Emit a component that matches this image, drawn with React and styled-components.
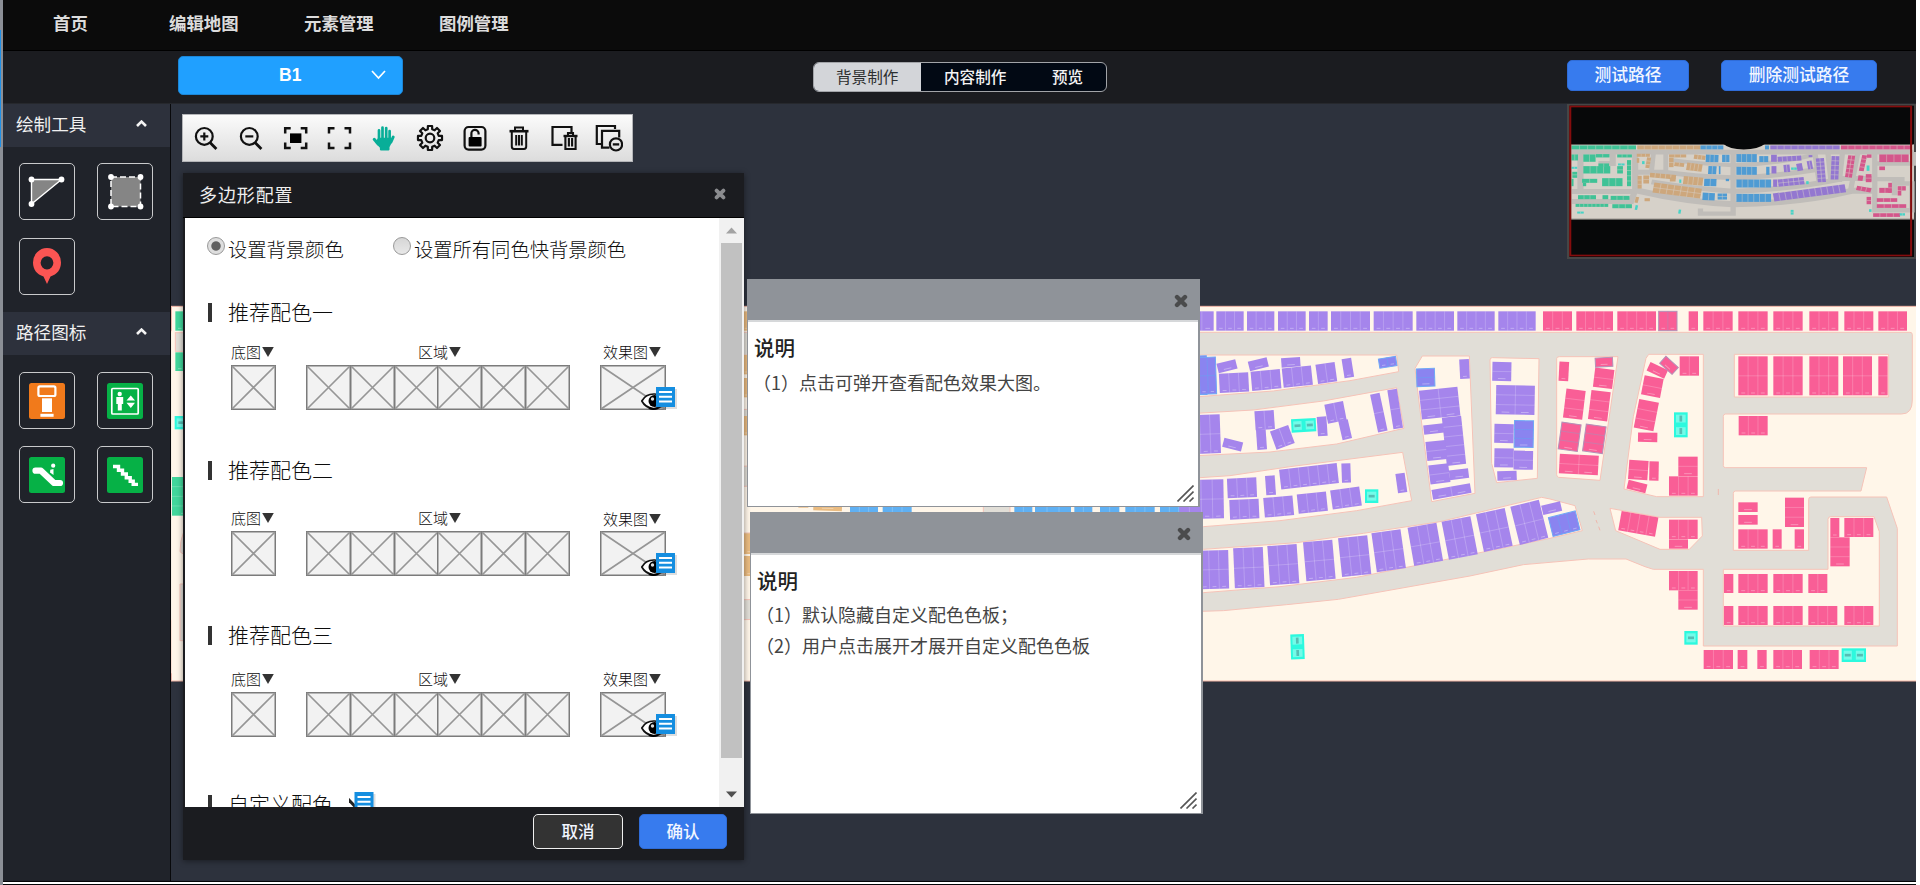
import React from 'react';
import styled, { createGlobalStyle } from 'styled-components';

const GlobalStyle = createGlobalStyle`
  * { box-sizing: border-box; }
  body {
    margin: 0;
    background: #fff;
    font-family: "Liberation Sans", "Noto Sans CJK SC", sans-serif;
    overflow: hidden;
  }
  svg { display: block; flex: none; }
`;

/* ---------- shell ---------- */

const Page = styled.div`
  width: 1920px;
  height: 885px;
  display: flex;
  background: #fff;
`;

const EdgeStrip = styled.div`
  width: 3px;
  height: 885px;
  background: #8b8f96;
  padding-top: 30px;
`;

const EdgeMark = styled.div`
  width: 1px;
  height: 117px;
  background: #1f8fe6;
`;

const Shell = styled.div`
  width: 1913px;
  height: 885px;
  display: flex;
  flex-direction: column;
`;

const NavBar = styled.nav`
  height: 51px;
  display: flex;
  background: #0b0b0b;
  border-bottom: 1px solid #000;
  padding: 0 0 2px 50px;
`;

const NavItem = styled.a`
  width: ${(p) => p.$width}px;
  line-height: 49px;
  font-size: 17.4px;
  font-weight: 700;
  color: #dcdcdc;
`;

const SubBar = styled.div`
  height: 53px;
  display: flex;
  background: #1b1c20;
  border-bottom: 1px solid #26282d;
`;

const FloorSelect = styled.div`
  margin: 5px 0 0 175px;
  width: 225px;
  height: 39px;
  display: flex;
  align-items: center;
  padding: 0 0 1px 100px;
  gap: 70px;
  background: #20a0ff;
  border: 1px solid #1c86d6;
  border-radius: 5px;
  color: #fff;
  font-size: 17.5px;
  font-weight: 700;
`;

const Segments = styled.div`
  margin: 11px 0 0 410px;
  width: 294px;
  height: 30px;
  display: flex;
  border: 1px solid #a2a4a8;
  border-radius: 6px;
  background: #020914;
  overflow: hidden;
`;

const Segment = styled.div`
  width: ${(p) => p.$width}px;
  padding-left: ${(p) => p.$pad}px;
  line-height: 29px;
  font-size: 15.6px;
  font-weight: ${(p) => (p.$active ? 400 : 500)};
  color: ${(p) => (p.$active ? '#2d2f30' : '#f4f4f4')};
  background: ${(p) => (p.$active ? '#d3d5d9' : 'transparent')};
  white-space: nowrap;
`;

const BlueButton = styled.button`
  width: ${(p) => p.$width}px;
  height: ${(p) => p.$height}px;
  margin: ${(p) => p.$margin || '0'};
  padding: 2px 0 0;
  border: 1px solid ${(p) => (p.$dark ? '#f0f0f0' : '#2f6cd8')};
  border-radius: 5px;
  background: ${(p) => (p.$dark ? '#333' : '#377bee')};
  color: #f2f6ff;
  font-family: inherit;
  font-size: ${(p) => p.$size}px;
  font-weight: 500;
  line-height: 1;
`;

const Main = styled.div`
  height: 777px;
  display: flex;
`;

const Footline = styled.div`
  height: 4px;
  border-top: 1px solid #050608;
  border-bottom: 1px solid #050608;
  background: #fff;
`;

/* ---------- sidebar ---------- */

const Sidebar = styled.aside`
  width: 168px;
  background: #20232a;
  border-right: 1px solid #08090b;
`;

const GroupHead = styled.div`
  height: 43px;
  display: flex;
  align-items: center;
  justify-content: space-between;
  padding: 0 23px 4px 13px;
  background: #2d313c;
  color: #f0f0f0;
  font-size: 17.6px;
`;

const ToolGrid = styled.div`
  display: flex;
  flex-wrap: wrap;
  align-content: flex-start;
  gap: ${(p) => p.$gap}px 22px;
  height: ${(p) => p.$height}px;
  padding: ${(p) => p.$top}px 0 0 16px;
`;

const Tool = styled.div`
  width: 56px;
  height: 57px;
  border: 1px solid #c9cacc;
  border-radius: 5px;
  display: flex;
  align-items: center;
  justify-content: center;
`;

/* ---------- canvas ---------- */

const Canvas = styled.main`
  position: relative;
  width: 1745px;
  height: 777px;
  background: #2d323d;
  overflow: hidden;
`;

const Toolbar = styled.div`
  position: absolute;
  left: 11px;
  top: 10px;
  width: 451px;
  height: 48px;
  display: flex;
  align-items: center;
  justify-content: space-between;
  padding: 0 9px 0 9px;
  background: linear-gradient(#fbfbfb, #dcdcdc);
  border: 1px solid #b4b5b8;
`;

const MiniMapFrame = styled.div`
  position: absolute;
  left: 1396px;
  top: 0;
  width: 349px;
  height: 155px;
`;

const Dialog = styled.section`
  position: absolute;
  left: 12px;
  top: 69px;
  width: 561px;
  height: 687px;
  display: flex;
  flex-direction: column;
  background: #1b1c20;
  box-shadow: 0 1px 6px rgba(0, 0, 0, 0.45);
`;

const DialogHead = styled.header`
  height: 45px;
  display: flex;
  align-items: center;
  justify-content: space-between;
  padding: 0 18px 2px 16px;
  border-bottom: 1px solid #000;
  color: #eee;
  font-size: 18px;
  letter-spacing: 0.9px;
`;

const DialogMiddle = styled.div`
  height: 589px;
  margin-left: 2px;
  display: flex;
  background: #fff;
`;

const DialogBody = styled.div`
  width: 534px;
  height: 589px;
  overflow: hidden;
  padding-left: 22px;
  color: #333;
`;

const DialogFoot = styled.footer`
  height: 53px;
  display: flex;
  justify-content: flex-end;
  gap: 16px;
  padding: 7px 17px 0 0;
`;

const ScrollTrack = styled.div`
  width: 25px;
  display: flex;
  flex-direction: column;
  align-items: center;
  background: #f1f1f1;
`;

const ScrollArrow = styled.div`
  height: 25px;
  display: flex;
  align-items: center;
`;

const ScrollThumb = styled.div`
  width: 21px;
  height: 515px;
  margin-bottom: 24px;
  background: #c1c1c1;
`;

const RadioRow = styled.div`
  height: 56px;
  display: flex;
  align-items: center;
`;

const Radio = styled.span`
  width: 18px;
  height: 18px;
  flex: none;
  border: 1px solid #999;
  border-radius: 50%;
  background: ${(p) =>
    p.$on
      ? 'radial-gradient(circle, #606060 0 4.2px, #dedede 5.2px)'
      : 'linear-gradient(#d6d6d6, #e8e8e8)'};
`;

const RadioText = styled.span`
  width: ${(p) => p.$width}px;
  padding: 5px 0 0 3px;
  font-size: 19.3px;
  font-weight: 300;
  color: #0c0c0c;
  white-space: nowrap;
`;

const SectionTitle = styled.h3`
  height: 40px;
  margin: ${(p) => p.$top}px 0 0 1px;
  display: flex;
  align-items: center;
  gap: 16px;
  font-size: 21px;
  font-weight: 300;
  line-height: 39px;
  color: #0c0c0c;
`;

const TitleBar = styled.span`
  width: 4px;
  height: 19px;
  background: #333;
`;

const PaletteRow = styled.div`
  display: flex;
  margin: ${(p) => p.$top}px 0 0 24px;
  gap: 30px;
`;

const Palette = styled.div`
  display: flex;
  flex-direction: column;
  gap: 2px;
`;

const PaletteLabel = styled.div`
  height: 20px;
  padding: ${(p) => (p.$low ? 2 : 0)}px 0 0 ${(p) => p.$pad}px;
  display: flex;
  align-items: center;
  gap: 1px;
  font-size: 15px;
  font-weight: 300;
  color: #0c0c0c;
  line-height: 20px;
`;

const Swatches = styled.div`
  display: flex;
  position: relative;
`;

const EyeBadge = styled.div`
  position: absolute;
  left: 41px;
  top: 22px;
`;

const Note = styled.section`
  position: absolute;
  left: ${(p) => p.$x}px;
  top: ${(p) => p.$y}px;
  width: 453px;
  height: ${(p) => p.$height}px;
  display: flex;
  flex-direction: column;
  background: #8f9399;
  padding: 0 2px 1px 1px;
`;

const NoteHead = styled.header`
  height: 41px;
  display: flex;
  align-items: center;
  justify-content: flex-end;
  padding: 3px 10px 0 0;
`;

const NoteBody = styled.div`
  flex: 1;
  display: flex;
  flex-direction: column;
  border-top: 2px solid #d6d8da;
  background: #fff;
  padding: 13px 4px 4px 6px;
`;

const NoteTitle = styled.h4`
  margin: 0 0 ${(p) => p.$gap}px;
  height: 28px;
  line-height: 28px;
  font-size: 20.5px;
  font-weight: 500;
  color: #222;
`;

const NoteLine = styled.p`
  margin: 0 0 0 -1px;
  height: 31px;
  line-height: 31px;
  font-size: 18px;
  font-weight: 400;
  color: #444;
  font-family: "Noto Sans CJK SC", sans-serif;
`;

const Grip = styled.div`
  margin-top: auto;
  align-self: flex-end;
`;

/* ---------- small drawings ---------- */

const Cross = ({ size, color }) => (
  <svg width={size} height={size} viewBox="0 0 14 14">
    <path d="M3 3 11 11M11 3 3 11" stroke={color} strokeWidth="4.4" strokeLinecap="round" />
  </svg>
);

const Caret = ({ color, up }) => (
  <svg width="11" height="7" viewBox="0 0 11 7">
    <path d={up ? 'M5.5 0.5 11 6.5H0Z' : 'M0 0.5H11L5.5 6.5Z'} fill={color} />
  </svg>
);

const ChevronUp = () => (
  <svg width="11" height="7" viewBox="0 0 11 7">
    <path d="M1 6 5.5 1.6 10 6" fill="none" stroke="#f4f4f4" strokeWidth="2.6" />
  </svg>
);

const LabelCaret = () => (
  <svg width="12" height="16" viewBox="0 0 12 16">
    <path d="M0.2 2H11.8L6 12Z" fill="#333" />
  </svg>
);

const Placeholder = ({ width, overlap }) => (
  <svg width={width} height="45" viewBox={`0 0 ${width} 45`} style={overlap ? { marginLeft: -1.2 } : undefined}>
    <rect x="0.75" y="0.75" width={width - 1.5} height="43.5" fill="#f2f2f2" stroke="#7b7b7b" strokeWidth="1.5" />
    <path d={`M1 1 ${width - 1} 44M${width - 1} 1 1 44`} stroke="#969696" strokeWidth="1.7" />
  </svg>
);

const NoteIcon = () => (
  <g>
    <rect x="1" y="2" width="20" height="20" fill="#000" opacity="0.13" />
    <rect width="19" height="20" fill="#158ee0" />
    <path d="M3 5H16M3 9.8H16M3 14.5H16" stroke="#fff" strokeWidth="2" />
  </g>
);

const EyeNote = () => (
  <svg width="36" height="24" viewBox="0 0 36 24">
    <path d="M0.8 14C3.5 9 8 6.8 13.5 7S23 10 26 14C22 19.5 17 22 12 21.5S3 18 0.8 14Z" fill="#fff" stroke="#111" strokeWidth="1.7" />
    <circle cx="13.5" cy="14" r="6" fill="#000" />
    <circle cx="11.5" cy="12" r="1.7" fill="#ddd" />
    <path d="M8 21Q12 23 17 21" stroke="#000" strokeWidth="2" fill="none" />
    <g transform="translate(15 0)"><NoteIcon /></g>
  </svg>
);

const GripIcon = () => (
  <svg width="17" height="17" viewBox="0 0 17 17">
    <path d="M0.5 16.5 16.5 0.5M6.5 16.5 16.5 6.5M12.5 16.5 16.5 12.5" stroke="#555" strokeWidth="1.6" />
  </svg>
);

const gearPath = (() => {
  const pts = [];
  for (let i = 0; i < 8; i += 1) {
    [[-14, 9], [-10, 12.2], [10, 12.2], [14, 9]].forEach(([off, r]) => {
      const a = ((i * 45 + off - 90) * Math.PI) / 180;
      pts.push(`${(14 + r * Math.cos(a)).toFixed(2)} ${(14 + r * Math.sin(a)).toFixed(2)}`);
    });
  }
  return `M${pts.join('L')}Z`;
})();

const toolbarIcons = [
  <><circle cx="12.3" cy="12.4" r="8.4" /><path d="M18 18.6 24.4 25" strokeWidth="2.8" /><path d="M8.3 12.4H16.3M12.3 8.4V16.4" /></>,
  <><circle cx="12.3" cy="12.4" r="8.4" /><path d="M18 18.6 24.4 25" strokeWidth="2.8" /><path d="M8.3 12.4H16.3" /></>,
  <g transform="translate(-0.8 0)"><path d="M4 9.5V4.3H9.5M19.5 4.3H25V9.5M25 18.5V24H19.5M9.5 24H4V18.5" strokeWidth="2.5" /><rect x="8.8" y="9.4" width="11.4" height="9.6" fill="#000" stroke="none" /></g>,
  <path transform="translate(-1 0)" d="M4 9.5V4.3H9.5M19.5 4.3H25V9.5M25 18.5V24H19.5M9.5 24H4V18.5" strokeWidth="2.5" />,
  <g transform="translate(-1.8 0)" stroke="#08ae98" fill="#08ae98" strokeLinecap="round" strokeLinejoin="round">
    <path d="M9.8 16V6.4M13.3 15V3.6M17 15V4M20.4 16V7" strokeWidth="2.7" />
    <path d="M5 15.3 9 20M24 13 21.8 18" strokeWidth="3" />
    <path d="M9.5 14.5H21L22 18 19.5 23V25.6H11.5V23.5L7 18.5Z" strokeWidth="1.6" />
  </g>,
  <><path d={gearPath} strokeLinejoin="round" /><circle cx="14" cy="14" r="4.3" /></>,
  <><rect x="3.6" y="3" width="20.8" height="22.6" rx="4" /><rect x="7.6" y="13" width="13" height="9.6" rx="1" fill="#000" stroke="none" /><path d="M10.4 13V9.8A3.6 3.6 0 0 1 17.6 9.2V10.5" /></>,
  <><path d="M4.5 7.2H23.5" strokeWidth="2.6" /><path d="M10 6V3.6H18V6M6.8 8V22.6Q6.8 25 9 25H19Q21.2 25 21.2 22.6V8M11.2 11V21.5M14 11V21.5M16.8 11V21.5" strokeWidth="2" /></>,
  <><path d="M12.5 20.8H2.5V3H21.5V8" /><path d="M13.5 12H27.5" strokeWidth="2.4" /><path d="M18 11V9H23V11M15.4 13V25H25.6V13M18.9 14V22.5M22.1 14V22.5" strokeWidth="2.1" /></>,
  <><path d="M6 20H1.8V2H20V5" /><path d="M14.5 23.6H7V6.8H24.2V13.5" /><circle cx="21" cy="20.4" r="6.1" /><path d="M17.8 20.4H24.2" strokeWidth="2.3" /></>,
];

const sideIcons = {
  triangle: (
    <svg width="54" height="55" viewBox="1 1 54 55">
      <path d="M12.5 16.5H42.5L12.5 41Z" fill="#858585" stroke="#fff" strokeWidth="1.4" />
      <g fill="#fff"><circle cx="12.5" cy="16.5" r="2.9" /><circle cx="42.5" cy="16.5" r="2.9" /><circle cx="12.5" cy="41" r="2.9" /></g>
    </svg>
  ),
  square: (
    <svg width="54" height="55" viewBox="1 1 54 55">
      <rect x="14" y="14" width="29.5" height="29.5" fill="#858585" stroke="#fff" strokeWidth="1.5" strokeDasharray="6 3" />
      <g fill="#fff"><circle cx="14" cy="14" r="2.9" /><circle cx="43.5" cy="14" r="2.9" /><circle cx="14" cy="43.5" r="2.9" /><circle cx="43.5" cy="43.5" r="2.9" /></g>
    </svg>
  ),
  pin: (
    <svg width="54" height="55" viewBox="1 1 54 55">
      <path fillRule="evenodd" d="M28 46 24.5 38.5C18 36.5 14 31.5 14 24.5A14 14.5 0 0 1 42 24.5C42 31.5 38 36.5 31.5 38.5ZM28 18.2A6.4 6.6 0 1 0 28 31.4A6.4 6.6 0 1 0 28 18.2Z" fill="#fb5553" />
    </svg>
  ),
  kiosk: (
    <svg width="36" height="36" viewBox="0 0 36 36">
      <rect width="36" height="36" rx="2.5" fill="#f17a1b" />
      <rect x="9.4" y="3.4" width="17" height="9.6" rx="1.5" fill="none" stroke="#fff" strokeWidth="2.2" />
      <rect x="13" y="15.3" width="10" height="13.7" fill="#fff" />
      <rect x="11.4" y="30.8" width="13.2" height="3" fill="#fff" />
    </svg>
  ),
  elevator: (
    <svg width="36" height="36" viewBox="0 0 36 36">
      <rect width="36" height="36" rx="2.5" fill="#06b146" />
      <rect x="4.8" y="5.5" width="26.4" height="25.5" rx="1" fill="none" stroke="#fff" strokeWidth="1.7" />
      <circle cx="12.7" cy="11" r="2.2" fill="#fff" />
      <path d="M9.3 14H16.2V21H14.8V27.5H10.8V21H9.3ZM19.5 17.5 23.8 12.4 28 17.5ZM19.5 19.8H28L23.8 25Z" fill="#fff" />
    </svg>
  ),
  escalator: (
    <svg width="36" height="36" viewBox="0 0 36 36">
      <rect width="36" height="36" rx="2.5" fill="#06b146" />
      <path d="M6.5 13.7H12L25 26H31" fill="none" stroke="#fff" strokeWidth="6.2" strokeLinecap="round" strokeLinejoin="round" />
      <circle cx="24.2" cy="8.7" r="2.1" fill="#fff" />
      <path d="M21.3 12.8 24.5 12V18L21 15.5Z" fill="#fff" />
    </svg>
  ),
  stairs: (
    <svg width="36" height="36" viewBox="0 0 36 36">
      <rect width="36" height="36" rx="2.5" fill="#06b146" />
      <path d="M6 9.5H11.5V13.2H15.5V17H19.3V20.8H23.2V24.3H26.2V27.4H31" fill="none" stroke="#fff" strokeWidth="3.4" />
    </svg>
  ),
};

/* ---------- map ---------- */

const PURPLE = '#a585ec';
const PINK = '#f95e96';
const BLUE = '#5fb0f3';
const ORANGE = '#eabb80';
const GREEN = '#41d69b';
const INDIGO = '#8a84f0';

// [x, y, width, height, columns, rows, angle]
const purpleBlocks = [
  [0, 34, 71, 58, 2, 1], [79, 34, 82, 58, 3, 1], [171, 34, 82, 58, 3, 1], [264, 34, 83, 58, 3, 1], [357, 34, 56, 58, 2, 1],
  [423, 34, 117, 58, 4, 1], [551, 34, 117, 58, 4, 1], [679, 34, 113, 58, 4, 1], [802, 34, 112, 58, 4, 1], [925, 34, 112, 58, 4, 1],
  [82, 184, 58, 29, 1, 1, -14], [176, 178, 58, 29, 1, 1, -14], [274, 173, 57, 28, 1, 1, -4],
  [88, 219, 88, 58, 3, 1, -3], [184, 211, 88, 58, 3, 1, -5], [278, 201, 88, 58, 3, 1, -6],
  [380, 190, 58, 58, 2, 1, -8], [459, 175, 29, 58, 1, 1, -9],
  [0, 344, 91, 117, 3, 2, -2], [195, 332, 58, 57, 2, 1, -4], [200, 389, 29, 60, 1, 1, -4], [99, 420, 58, 28, 1, 1, 14],
  [248, 383, 58, 58, 2, 1, -20], [382, 350, 29, 58, 1, 1, -4], [408, 308, 57, 58, 2, 1, -11], [451, 360, 29, 58, 1, 1, -13],
  [552, 280, 29, 116, 1, 2, -12], [601, 268, 29, 118, 1, 2, -9],
  [0, 539, 101, 117, 3, 2, -1], [112, 534, 88, 59, 3, 1, -2.5], [227, 527, 29, 58, 1, 1, -4],
  [270, 499, 174, 60, 6, 1, -6.5], [455, 490, 27, 58, 1, 1, -2], [620, 520, 28, 58, 1, 1, -8],
  [119, 598, 88, 59, 3, 1, -2.5], [222, 590, 88, 59, 3, 1, -5], [323, 579, 88, 58, 3, 1, -6], [424, 565, 88, 58, 3, 1, -8],
  [809, 178, 29, 58, 1, 1, -3], [691, 266, 116, 87, 2, 3, -6], [763, 350, 58, 145, 1, 5, -6],
  [701, 373, 60, 28, 1, 1, -7], [709, 423, 60, 57, 1, 2, -6], [718, 493, 60, 57, 1, 2, -7], [778, 508, 58, 29, 1, 1, -7], [726, 560, 117, 29, 2, 1, -10],
  [907, 186, 57, 57, 1, 2, 1], [918, 256, 116, 88, 2, 3, 1], [913, 372, 58, 57, 1, 2, 1], [913, 445, 58, 57, 1, 2, 1], [971, 452, 58, 57, 1, 2, 1], [922, 513, 58, 28, 1, 1, -2],
  [-60, 752, 176, 116, 6, 2, -1.5], [132, 743, 89, 120, 3, 2, -2.5], [236, 735, 88, 118, 3, 2, -4], [344, 723, 88, 117, 3, 2, -5],
  [450, 710, 88, 117, 3, 2, -6], [552, 693, 88, 118, 3, 2, -8], [662, 675, 88, 116, 3, 2, -10], [765, 656, 88, 116, 3, 2, -11],
  [869, 632, 88, 116, 3, 2, -12], [974, 608, 88, 118, 3, 2, -14], [1056, 610, 58, 29, 1, 1, -13],
  [-30, 620, 60, 130, 2, 2, -2],
];

const indigoBlocks = [
  [0, 168, 50, 116, 2, 2, -1], [28, 172, 50, 110, 2, 2, -2], [567, 173, 52, 28, 2, 1, -9], [680, 206, 54, 53, 1, 2, -2],
  [973, 362, 57, 80, 1, 3, 1], [1081, 642, 83, 58, 3, 1, -14],
];

const pinkBlocks = [
  [1059, 34, 87, 58, 3, 1], [1159, 34, 110, 58, 4, 1], [1282, 34, 116, 58, 4, 1], [1496, 34, 28, 58, 1, 1],
  [1540, 34, 88, 58, 3, 1], [1645, 34, 88, 58, 3, 1], [1750, 34, 88, 58, 3, 1], [1858, 34, 87, 58, 3, 1], [1963, 34, 87, 58, 3, 1], [2065, 34, 86, 58, 3, 1],
  [1645, 169, 88, 117, 3, 2], [1750, 169, 88, 117, 3, 2], [1858, 169, 87, 117, 3, 2], [1959, 169, 87, 117, 3, 2], [2065, 169, 28, 117, 1, 2],
  [1107, 185, 29, 58, 1, 1, 3], [1212, 206, 58, 58, 1, 2, 7], [1124, 269, 58, 87, 1, 3, 7], [1199, 273, 58, 88, 1, 3, 7],
  [1108, 464, 117, 59, 2, 2, 3],
  [1469, 169, 58, 58, 2, 1], [1373, 197, 58, 28, 1, 1, 25], [1358, 231, 58, 58, 1, 2, 11], [1339, 302, 60, 87, 1, 3, 11],
  [1344, 398, 58, 28, 1, 1, 1], [1316, 481, 58, 58, 1, 2, 4], [1378, 484, 28, 58, 1, 1, 1], [1312, 546, 58, 27, 1, 1, 14],
  [1465, 470, 58, 58, 1, 2], [1437, 529, 86, 58, 3, 1],
  [1646, 348, 87, 58, 3, 1], [1645, 607, 58, 29, 1, 1], [1645, 645, 58, 29, 1, 1], [1785, 593, 57, 88, 1, 3],
  [1645, 688, 88, 58, 3, 1], [1748, 688, 27, 58, 1, 1], [1814, 688, 28, 58, 1, 1], [1921, 654, 27, 58, 1, 1], [1963, 654, 87, 57, 3, 1], [1921, 712, 58, 87, 1, 3],
  [1289, 642, 112, 59, 4, 1, 10], [1437, 659, 86, 58, 3, 1], [1437, 718, 57, 28, 1, 1], [1437, 813, 86, 58, 3, 1], [1465, 871, 58, 58, 1, 2],
  [1602, 822, 28, 57, 1, 1], [1645, 822, 88, 57, 3, 1], [1750, 822, 88, 57, 3, 1], [1855, 822, 57, 57, 2, 1],
  [1602, 918, 28, 57, 1, 1], [1645, 918, 88, 57, 3, 1], [1750, 918, 88, 57, 3, 1], [1855, 918, 87, 57, 3, 1], [1963, 918, 87, 57, 3, 1],
  [1541, 1050, 88, 57, 3, 1], [1643, 1050, 29, 57, 1, 1], [1702, 1050, 28, 57, 1, 1], [1750, 1050, 86, 57, 3, 1], [1859, 1050, 87, 57, 3, 1],
];

const outlinedPinkBlocks = [
  [1406, 34, 55, 58, 2, 1], [1216, 173, 52, 27, 1, 1, -3], [1110, 370, 58, 81, 1, 3, 8], [1183, 376, 60, 81, 1, 3, 8], [1412, 182, 50, 28, 1, 1, 42],
];

const cyanBlocks = [
  [304, 356, 74, 40, 2, 1, -3], [525, 568, 40, 41, 1, 1], [1452, 337, 41, 75, 1, 2], [302, 1003, 41, 75, 1, 2, -2],
  [1483, 993, 40, 41, 1, 1], [1955, 1045, 73, 41, 2, 1], [-3046, 348, 40, 40, 1, 1],
];

const islands = [
  'M-1400 165H620L626 215 480 242 250 273 0 292-1400 330Z',
  'M-1400 380 0 341 190 330 400 303 620 263 642 385 440 432 240 456 0 468-1400 500Z',
  'M-1400 560 0 535 120 527 300 500 638 457 665 602 500 632 270 662 40 680-1400 700Z',
  'M675 205 697 168H838L855 580 725 605 690 330Z',
  'M900 180Q900 173 907 173L1047 176 1042 535 920 548 905 490Z',
  'M1100 176Q1100 170 1108 170H1284L1230 541 1106 532Q1100 530 1100 524Z',
  'M1376 163H1540V590H1400L1302 567 1330 350 1368 175Z',
  'M1633 163H2096V291H1633Z',
  'M-1400 760 40 748 320 728 520 700 750 665 1055 592 1080 597 1155 617 1177 692 1080 715 900 752 500 832 270 860 40 878-1400 900Z',
  'M1260 625 1410 652H1535L1537 708 1498 748H1410L1277 692Z',
  'M1600 808H1914V658Q1914 650 1922 650H2052L2068 695V978H1600Z',
];

const roadPath =
  'M-3100 97H2160Q2167 97 2167 104V300Q2167 342 2135 342H1607Q1600 342 1600 349V497Q1600 503 1607 503H2030L2013 573H1637Q1630 573 1630 580V751H1856V598Q1856 591 1863 591H2090L2122 685V1038H1540V808H1390L1365 800 1308 777H1195L1000 794 840 828 445 898 290 914 100 932 0 935-1400 960-3100 960Z';

const Block = ({ spec, fill, line = 'rgba(255,255,255,0.3)', stroke = 'none' }) => {
  const [x, y, w, h, cols, rows, angle = 0] = spec;
  let lines = '';
  for (let i = 1; i < cols; i += 1) lines += `M${x + (w * i) / cols} ${y}V${y + h}`;
  for (let i = 1; i < rows; i += 1) lines += `M${x} ${y + (h * i) / rows}H${x + w}`;
  return (
    <g transform={`rotate(${angle} ${x + w / 2} ${y + h / 2})`}>
      <rect x={x} y={y} width={w} height={h} fill={fill} stroke={stroke} strokeWidth="3" />
      <path d={lines} stroke={line} strokeWidth="2" />
      {w > 20 && w >= cols * 20 && (
        <path
          d={Array.from({ length: cols }, (_, i) => `M${x + (w * (i + 0.3)) / cols} ${y + h - 7}h${(w / cols) * 0.4}`).join('')}
          stroke="rgba(255,255,255,0.33)"
          strokeWidth="3"
        />
      )}
    </g>
  );
};

const CyanBlock = ({ spec }) => {
  const [x, y, w, h, cols, rows, angle = 0] = spec;
  const cells = [];
  for (let i = 0; i < cols; i += 1) {
    for (let j = 0; j < rows; j += 1) cells.push([x + (w * i) / cols, y + (h * j) / rows]);
  }
  const cw = w / cols;
  const ch = h / rows;
  return (
    <g transform={`rotate(${angle} ${x + w / 2} ${y + h / 2})`}>
      <rect x={x} y={y} width={w} height={h} fill="#2cf9de" />
      {cells.map(([cx, cy]) => (
        <g key={`${cx}-${cy}`}>
          <rect x={cx + 6} y={cy + 7} width={cw - 12} height={ch - 14} fill="#73fbe9" />
          <rect x={cx + cw / 2 - (rows > 1 ? 4 : 9)} y={cy + ch / 2 - (rows > 1 ? 9 : 4)} width={rows > 1 ? 8 : 18} height={rows > 1 ? 18 : 8} fill="#55bdb4" />
        </g>
      ))}
    </g>
  );
};

const simple = (fill, list) => list.map((s) => <Block key={s.join()} spec={s} fill={fill} />);

const MapDrawing = () => (
  <svg width="1745" height="777" viewBox="0 0 1745 777">
    <g transform="translate(1019 196) scale(0.33333)">
      <rect x="-3056" y="19" width="5240" height="1124" fill="#fff6e9" stroke="#f5b6a8" strokeWidth="3" />
      <g fill="#e1ded7" stroke="#f6c3b8" strokeWidth="3">
        <path d={roadPath} />
        <g fill="#fff6e9">{islands.map((d) => <path key={d} d={d} />)}</g>
        <path d="M-620 610H-540V640H-620Z" />
        <path d="M-3056 92H-2900V1120H-3056Z" fill="#fff6e9" stroke="none" />
        <rect x="-3044" y="98" width="60" height="56" />
        <path d="M-3030 755Q-3030 690-2990 660V770H-3010Z" />
        <path d="M-3030 852H-2990V1022H-3030Z" />
      </g>
      <path d="M1585 567V585M1211 634 1215 645M1218 660 1222 670M1226 680 1230 691" stroke="#efb7ac" strokeWidth="3" />
      {simple(GREEN, [[-3044, 34, 80, 58, 3, 1], [-3044, 157, 80, 56, 3, 1], [-3054, 531, 90, 116, 1, 4]])}
      {simple(ORANGE, [
        [-1345, 34, 30, 58, 1, 1], [-1345, 165, 30, 58, 1, 1], [-1345, 234, 30, 58, 1, 1], [-1345, 348, 30, 58, 1, 1],
        [-1340, 700, 40, 62, 1, 1], [-1340, 768, 40, 60, 1, 1], [-1130, 610, 86, 22, 1, 1, 2], [-1175, 611, 30, 12, 1, 1],
      ])}
      {simple(BLUE, [
        [-1020, 600, 84, 58, 3, 1], [-922, 600, 87, 58, 3, 1], [-527, 600, 54, 58, 2, 1], [-465, 600, 108, 58, 3, 1], [-347, 600, 54, 58, 2, 1],
        [-270, 600, 58, 58, 2, 1], [-194, 600, 88, 58, 3, 1], [-90, 600, 84, 58, 3, 1],
      ])}
      {simple(PURPLE, purpleBlocks)}
      {simple(PINK, pinkBlocks)}
      {outlinedPinkBlocks.map((s) => <Block key={s.join()} spec={s} fill={PINK} stroke="#b391b8" line="#b986b0" />)}
      {indigoBlocks.map((s) => <Block key={s.join()} spec={s} fill={INDIGO} stroke="#6fa9f5" line="#6f9af2" />)}
      {cyanBlocks.map((s) => <CyanBlock key={s.join()} spec={s} />)}
    </g>
  </svg>
);

/* ---------- overview map ---------- */

const G = '#3fc296';
const O = '#cda77c';
const B = '#4f9bd3';
const P = '#9377d0';
const R = '#d4568b';
const C = '#46d3c6';

// [color, x, y, width, height, columns, rows, angle]
const miniBlocks = [
  [G, 714, 436, 158, 12, 8, 1], [O, 875, 436, 155, 12, 9, 1], [B, 1030, 436, 56, 12, 4, 1], [B, 1188, 436, 10, 12, 1, 1], [P, 1201, 436, 170, 12, 10, 1], [R, 1374, 436, 172, 12, 10, 1],
  [G, 714, 463, 16, 18, 2, 1], [G, 743, 463, 30, 22, 2, 1], [G, 774, 462, 33, 10, 2, 1], [G, 743, 498, 66, 22, 4, 1], [G, 780, 490, 26, 10, 2, 1], [G, 740, 536, 37, 12, 2, 1], [G, 742, 548, 8, 10, 1, 1],
  [G, 789, 534, 50, 24, 3, 1], [G, 826, 463, 36, 9, 3, 1], [G, 850, 480, 10, 78, 1, 5], [G, 826, 498, 14, 22, 1, 2], [G, 716, 515, 12, 18, 1, 2], [G, 714, 536, 5, 22, 1, 1],
  [G, 730, 585, 44, 12, 3, 1], [G, 790, 585, 14, 12, 1, 1], [G, 810, 587, 46, 12, 3, 1], [G, 724, 611, 80, 9, 8, 1], [G, 814, 612, 48, 12, 3, 1], [C, 828, 490, 16, 6, 2, 1], [C, 714, 500, 14, 6, 2, 1], [C, 728, 634, 16, 6, 2, 1],
  [O, 874, 461, 32, 9, 3, 1], [O, 897, 472, 10, 32, 1, 3, 8], [O, 874, 474, 6, 14, 1, 1], [O, 953, 463, 42, 9, 3, 1], [O, 953, 473, 11, 28, 1, 2], [O, 966, 488, 24, 11, 2, 1, 8], [O, 996, 490, 38, 22, 4, 1, 8], [O, 1014, 465, 28, 13, 3, 1, 8],
  [O, 876, 527, 10, 38, 1, 3], [O, 890, 526, 14, 24, 1, 2], [O, 906, 521, 64, 14, 5, 1, 6], [O, 955, 532, 14, 12, 1, 1], [O, 988, 530, 48, 24, 4, 1, 6], [O, 914, 556, 118, 30, 7, 2, 9], [O, 870, 590, 8, 18, 1, 1, 12], [O, 893, 594, 13, 9, 1, 1],
  [C, 887, 483, 6, 9, 1, 1], [C, 978, 538, 5, 10, 1, 1], [C, 870, 615, 6, 14, 1, 1, 10], [C, 976, 628, 6, 12, 1, 1, 8],
  [B, 1043, 464, 31, 22, 3, 1, 2], [B, 1083, 464, 18, 22, 2, 1], [B, 1049, 498, 20, 24, 2, 1, 3], [B, 1075, 498, 4, 24, 1, 1], [B, 1039, 536, 30, 22, 2, 1, 2], [B, 1092, 536, 8, 7, 1, 1], [B, 1035, 578, 30, 22, 2, 1, 3], [B, 1072, 580, 23, 18, 2, 2],
  [B, 1118, 462, 50, 24, 4, 1], [B, 1174, 468, 22, 18, 2, 1], [B, 1118, 500, 50, 24, 4, 1], [B, 1191, 500, 8, 24, 1, 1], [B, 1118, 538, 85, 24, 6, 1], [B, 1118, 581, 85, 24, 6, 1],
  [P, 1203, 464, 14, 21, 1, 1], [P, 1219, 468, 58, 15, 5, 1, -4], [P, 1295, 465, 9, 6, 1, 1], [P, 1204, 498, 12, 22, 1, 1], [P, 1234, 494, 15, 22, 2, 1, -5], [P, 1266, 490, 14, 22, 1, 1, -10], [P, 1292, 482, 12, 25, 2, 1, -9],
  [P, 1208, 538, 10, 22, 1, 1], [P, 1220, 534, 64, 22, 5, 2, -7], [P, 1208, 566, 178, 24, 12, 1, -9], [P, 1315, 474, 20, 72, 2, 6, -4], [P, 1350, 468, 19, 70, 2, 5, 2],
  [C, 1252, 502, 14, 7, 2, 1], [C, 1289, 543, 6, 9, 1, 1], [C, 1251, 629, 7, 14, 1, 2],
  [R, 1388, 466, 17, 66, 2, 5, 7], [R, 1422, 465, 12, 48, 1, 4, 10], [R, 1438, 463, 11, 10, 1, 1], [R, 1468, 463, 72, 23, 4, 1], [R, 1468, 499, 14, 11, 1, 1], [R, 1416, 526, 12, 16, 1, 1, 8], [R, 1435, 522, 14, 24, 1, 2],
  [R, 1412, 560, 36, 13, 3, 1, 12], [R, 1437, 590, 11, 22, 1, 2], [R, 1468, 563, 28, 15, 2, 1], [R, 1490, 548, 9, 30, 1, 2], [R, 1513, 558, 20, 13, 2, 1], [R, 1513, 572, 9, 14, 1, 1],
  [R, 1462, 594, 50, 11, 3, 1], [R, 1462, 612, 72, 11, 4, 1], [R, 1453, 639, 66, 11, 4, 1], [C, 1437, 496, 7, 16, 1, 1], [C, 1443, 627, 6, 8, 1, 1], [C, 1518, 639, 13, 7, 2, 1],
];

const MiniMap = () => (
  <MiniMapFrame>
    <svg width="349" height="155" viewBox="703 312 855 464" preserveAspectRatio="none">
      <rect x="703" y="312" width="855" height="464" fill="#464646" />
      <rect x="709" y="317" width="844" height="453" fill="#070809" />
      <rect x="713" y="432" width="840" height="226" fill="#d6d1c9" />
      <path d="M713 433H1552M713 657H1552" stroke="#5f5c59" strokeWidth="3" />
      <g fill="none" stroke="#c0bdb9" strokeWidth="15">
        <path d="M714 456H1552" strokeWidth="14" />
        <path d="M736 456V572M714 574H870M714 604H860L870 570V456M815 456V490H780M870 516H940Q1010 528 1110 533 1200 530 1315 508" />
        <path d="M915 456 910 515M945 456V512M960 480Q1050 494 1110 495 1210 494 1310 464" strokeWidth="12" />
        <path d="M910 545Q1010 565 1110 573 1240 570 1380 535H1450" />
        <path d="M870 570Q1000 607 1110 612 1270 610 1400 572H1452" strokeWidth="18" />
        <path d="M1110 456V640H1030V625M1310 456 1322 555M1342 456 1350 545M1378 456 1370 545M1415 460 1398 570M1457 456V630H1548V550H1505V585M1552 456V490H1457M1457 537H1530" strokeWidth="13" />
      </g>
      <path d="M1086 431Q1100 448 1136 448T1188 431Z" fill="#070809" />
      {miniBlocks.map(([color, x, y, w, h, cols, rows, angle = 0]) => {
        let lines = '';
        for (let i = 1; i < cols; i += 1) lines += `M${x + (w * i) / cols} ${y}V${y + h}`;
        for (let i = 1; i < rows; i += 1) lines += `M${x} ${y + (h * i) / rows}H${x + w}`;
        return (
          <g key={`${x}-${y}-${w}`} transform={`rotate(${angle} ${x + w / 2} ${y + h / 2})`}>
            <rect x={x} y={y} width={w} height={h} fill={color} />
            <path d={lines} stroke="#d6d1c9" strokeWidth="2" strokeOpacity="0.6" />
          </g>
        );
      })}
      <rect x="711" y="319.5" width="835" height="446" fill="none" stroke="#840c0d" strokeWidth="5" />
    </svg>
  </MiniMapFrame>
);

/* ---------- dialog ---------- */

const PaletteSection = ({ title, top, gap, low }) => (
  <>
    <SectionTitle $top={top}><TitleBar />{title}</SectionTitle>
    <PaletteRow $top={gap}>
      <Palette>
        <PaletteLabel $pad={0}>底图<LabelCaret /></PaletteLabel>
        <Swatches><Placeholder width={45} /></Swatches>
      </Palette>
      <Palette>
        <PaletteLabel $pad={112}>区域<LabelCaret /></PaletteLabel>
        <Swatches>
          {[0, 1, 2, 3, 4, 5].map((i) => <Placeholder key={i} width={45} overlap={i > 0} />)}
        </Swatches>
      </Palette>
      <Palette>
        <PaletteLabel $pad={3} $low={low}>效果图<LabelCaret /></PaletteLabel>
        <Swatches>
          <Placeholder width={66} />
          <EyeBadge><EyeNote /></EyeBadge>
        </Swatches>
      </Palette>
    </PaletteRow>
  </>
);

const NoteWindow = ({ x, y, height, lines, gap }) => (
  <Note $x={x} $y={y} $height={height}>
    <NoteHead><Cross size={14} color="#4a4b4c" /></NoteHead>
    <NoteBody>
      <NoteTitle $gap={gap}>说明</NoteTitle>
      {lines.map((l) => <NoteLine key={l}>{l}</NoteLine>)}
      <Grip><GripIcon /></Grip>
    </NoteBody>
  </Note>
);

export default function App() {
  return (
    <Page>
      <GlobalStyle />
      <EdgeStrip><EdgeMark /></EdgeStrip>
      <Shell>
        <NavBar>
          <NavItem $width={116}>首页</NavItem>
          <NavItem $width={135}>编辑地图</NavItem>
          <NavItem $width={135}>元素管理</NavItem>
          <NavItem $width={135}>图例管理</NavItem>
        </NavBar>
        <SubBar>
          <FloorSelect>
            B1
            <svg width="15" height="10" viewBox="0 0 15 10"><path d="M1 1 7.5 8 14 1" fill="none" stroke="#fff" strokeWidth="1.7" /></svg>
          </FloorSelect>
          <Segments>
            <Segment $width={107} $pad={22} $active>背景制作</Segment>
            <Segment $width={107} $pad={23}>内容制作</Segment>
            <Segment $width={78} $pad={24}>预览</Segment>
          </Segments>
          <BlueButton $width={122} $height={31} $size={16.8} $margin="9px 0 0 460px">测试路径</BlueButton>
          <BlueButton $width={156} $height={31} $size={16.8} $margin="9px 0 0 32px">删除测试路径</BlueButton>
        </SubBar>
        <Main>
          <Sidebar>
            <GroupHead>绘制工具<ChevronUp /></GroupHead>
            <ToolGrid $top={16} $gap={18} $height={165}>
              <Tool>{sideIcons.triangle}</Tool>
              <Tool>{sideIcons.square}</Tool>
              <Tool>{sideIcons.pin}</Tool>
            </ToolGrid>
            <GroupHead>路径图标<ChevronUp /></GroupHead>
            <ToolGrid $top={17} $gap={17} $height={200}>
              <Tool>{sideIcons.kiosk}</Tool>
              <Tool>{sideIcons.elevator}</Tool>
              <Tool>{sideIcons.escalator}</Tool>
              <Tool>{sideIcons.stairs}</Tool>
            </ToolGrid>
          </Sidebar>
          <Canvas>
            <MapDrawing />
            <MiniMap />
            <Toolbar>
              {toolbarIcons.map((icon, i) => (
                <svg key={i} width="28" height="28" viewBox="0 0 28 28" fill="none" stroke="#111" strokeWidth="2.2">{icon}</svg>
              ))}
            </Toolbar>
            <Dialog>
              <DialogHead>多边形配置<Cross size={12} color="#8b8c8f" /></DialogHead>
              <DialogMiddle>
                <DialogBody>
                  <RadioRow>
                    <Radio $on /><RadioText $width={168}>设置背景颜色</RadioText>
                    <Radio /><RadioText $width={220}>设置所有同色快背景颜色</RadioText>
                  </RadioRow>
                  <PaletteSection title="推荐配色一" top={18} gap={11} />
                  <PaletteSection title="推荐配色二" top={40} gap={19} low />
                  <PaletteSection title="推荐配色三" top={39} gap={15} />
                  <SectionTitle $top={47}>
                    <TitleBar />自定义配色
                    <svg width="32" height="24" viewBox="3 0 32 24">
                      <path d="M2 7 9.5 15" stroke="#222" strokeWidth="3" />
                      <g transform="translate(8.5 0)"><NoteIcon /></g>
                    </svg>
                  </SectionTitle>
                </DialogBody>
                <ScrollTrack>
                  <ScrollArrow><Caret color="#a3a3a3" up /></ScrollArrow>
                  <ScrollThumb />
                  <ScrollArrow><Caret color="#505050" /></ScrollArrow>
                </ScrollTrack>
              </DialogMiddle>
              <DialogFoot>
                <BlueButton $width={90} $height={35} $size={16.5} $dark>取消</BlueButton>
                <BlueButton $width={88} $height={35} $size={16.5}>确认</BlueButton>
              </DialogFoot>
            </Dialog>
            <NoteWindow x={576} y={175} height={228} gap={4} lines={['（1）点击可弹开查看配色效果大图。']} />
            <NoteWindow x={579} y={408} height={302} gap={3} lines={['（1）默认隐藏自定义配色色板；', '（2）用户点击展开才展开自定义配色色板']} />
          </Canvas>
        </Main>
        <Footline />
      </Shell>
    </Page>
  );
}
